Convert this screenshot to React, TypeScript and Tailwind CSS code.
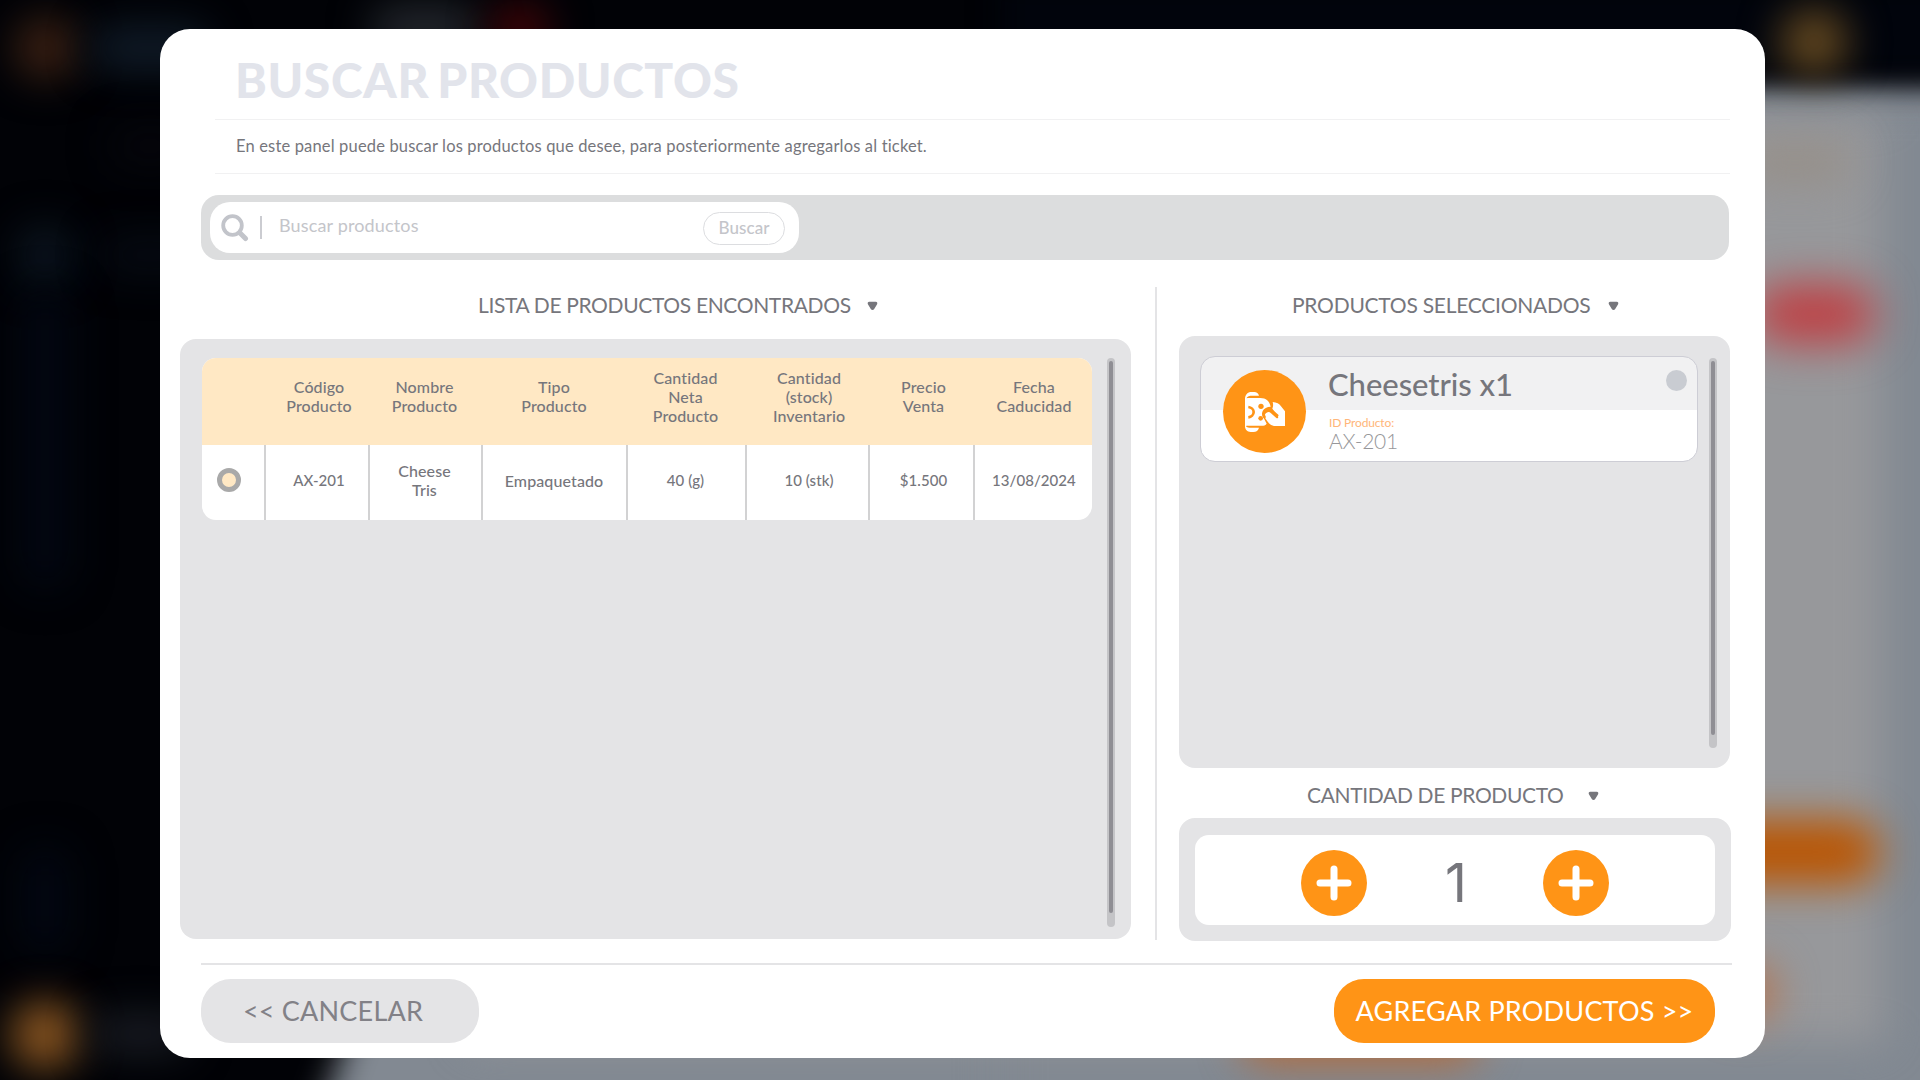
import type { ReactNode } from "react";

const columns = [
  { title: ["Código", "Producto"], cell: "w-[104px] pl-1", value: ["AX-201"] },
  { title: ["Nombre", "Producto"], cell: "w-[113px] pr-0.5", value: ["Cheese", "Tris"] },
  { title: ["Tipo", "Producto"], cell: "w-[145px] pr-px", value: ["Empaquetado"] },
  { title: ["Cantidad", "Neta", "Producto"], cell: "w-[119px] pr-0.5", value: ["40 (g)"] },
  { title: ["Cantidad", "(stock)", "Inventario"], cell: "w-[123px] pl-[3px]", value: ["10 (stk)"] },
  { title: ["Precio", "Venta"], cell: "w-[105px] pl-1", value: ["$1.500"] },
  { title: ["Fecha", "Caducidad"], cell: "w-[119px] pl-px", value: ["13/08/2024"] },
];

function Backdrop() {
  return (
    <div className="absolute inset-0 overflow-hidden bg-[#010206]">
      <div className="absolute left-[492px] top-[92px] h-[1100px] w-[1400px] -skew-x-[20deg] bg-[#828992] blur-[17px]" />
      <div className="absolute left-[1000px] top-[92px] h-[1100px] w-[1020px] bg-[#828992] blur-[20px]" />
      <div className="absolute left-[470px] top-[112px] h-[930px] w-[1412px] bg-[#97989b] blur-[20px]" />
      <div className="absolute left-[1000px] top-[-20px] h-[100px] w-[1100px] bg-[#01040c] blur-[15px]" />
      <div className="absolute left-[14px] top-[16px] h-[64px] w-[64px] rounded-full bg-[#3a2013] blur-[20px]" />
      <div className="absolute left-[90px] top-[26px] h-[44px] w-[120px] rounded-full bg-[#101c29] blur-[20px]" />
      <div className="absolute left-[370px] top-[6px] h-[44px] w-[110px] rounded-full bg-[#25292f] blur-[20px]" />
      <div className="absolute left-[490px] top-[6px] h-[44px] w-[60px] rounded-full bg-[#480508] blur-[20px]" />
      <div className="absolute left-[110px] top-[128px] h-[36px] w-[80px] rounded-full bg-[#06060c] blur-[20px]" />
      <div className="absolute left-[17px] top-[225px] h-[60px] w-[56px] rounded-full bg-[#0c1621] blur-[20px]" />
      <div className="absolute left-[100px] top-[238px] h-[34px] w-[100px] rounded-full bg-[#060b14] blur-[20px]" />
      <div className="absolute left-[20px] top-[290px] h-[300px] w-[50px] rounded-full bg-[#020712] blur-[20px]" />
      <div className="absolute left-[20px] top-[846px] h-[110px] w-[50px] rounded-full bg-[#020712] blur-[20px]" />
      <div className="absolute left-[10px] top-[1000px] h-[70px] w-[70px] rounded-full bg-[#885521] blur-[20px]" />
      <div className="absolute left-[90px] top-[1014px] h-[40px] w-[100px] rounded-full bg-[#191c23] blur-[20px]" />
      <div className="absolute left-[1780px] top-[8px] h-[68px] w-[68px] rounded-full bg-[#634820] blur-[20px]" />
      <div className="absolute left-[1740px] top-[142px] h-[40px] w-[110px] rounded-full bg-[#968f88] blur-[20px]" />
      <div className="absolute left-[1753px] top-[284px] h-[60px] w-[122px] rounded-full bg-[#bd4145] blur-[22px]" />
      <div className="absolute left-[1680px] top-[819px] h-[66px] w-[200px] rounded-full bg-[#b95604] blur-[20px]" />
      <div className="absolute left-[1720px] top-[962px] h-[60px] w-[56px] rounded-full bg-[#b4744f] blur-[20px]" />
      <div className="absolute left-[1240px] top-[1010px] h-[54px] w-[240px] rounded-full bg-[#b06a3c] blur-[20px]" />
    </div>
  );
}

function Marker() {
  return (
    <svg width="11" height="10" viewBox="0 0 11 10" className="mt-0.5 block fill-[#76767c]">
      <path d="M2.2.8h6.6c1.3 0 1.9 1.3 1.3 2.4L7.2 8.1c-.7 1.2-2.7 1.2-3.4 0L.9 3.2C.3 2.1.9.8 2.2.8z" />
    </svg>
  );
}

function Heading({ children, className, gap, tracking }: { children: ReactNode; className: string; gap: string; tracking: string }) {
  return (
    <div className={`flex items-center text-[21px] text-[#76767c] ${className} ${gap}`}>
      <h2 className={`whitespace-nowrap ${tracking}`}>{children}</h2>
      <Marker />
    </div>
  );
}

function Scrollbar({ track, thumb }: { track: string; thumb: string }) {
  return (
    <div className={`w-2 shrink-0 rounded-full bg-[#c4c4c7] px-0.5 pt-[3px] ${track}`}>
      <div className={`w-1 rounded-full bg-[#8f8e94] ${thumb}`} />
    </div>
  );
}

function CheeseIcon() {
  return (
    <svg width="40" height="40" viewBox="0 0 120 120" fill="none">
      <path d="M0 22C0 8 8 0 19 0h9c7 0 12 4 14 11H16C8 12 5 16 3 22z" fill="#fff" />
      <path d="M0 98c3 5 7 9 14 9h28c-2 8-8 13-17 13h-8C7 120 0 113 0 103z" fill="#fff" />
      <path d="M0 22c3-3 7-4 12-4h34c17 0 28 10 31 26-11 0-20 5-24 13-4 9-2 17 5 25l7 13c-3 5-9 6-15 6H12c-6 0-10-1-12-3z" fill="#fff" />
      <path d="M0 18h5v84H0z" fill="#fff" />
      <path d="M10 45c9 1 16 7 16 15s-7 15-16 16" stroke="#ff9416" strokeWidth="8" />
      <circle cx="48" cy="43" r="8" fill="#ff9416" />
      <circle cx="47" cy="79" r="7" fill="#ff9416" />
      <path d="M83 30c12 1 20 5 25 13l12 15v44H92c-13 0-21-7-27-17l-5-8c-3-7 0-13 5-15 5-3 9-2 13 2l16 14c4 2 7-1 5-5L82 50c3-6 3-13 1-20z" fill="#fff" />
      <path d="M97 70 80 56c-6-5-13-4-18 0-6 5-7 12-3 19" stroke="#ff9416" strokeWidth="7" strokeLinecap="round" />
    </svg>
  );
}

function RoundPlus() {
  return (
    <button className="flex size-[66px] items-center justify-center rounded-full bg-[#ff9416]">
      <svg width="36" height="36" viewBox="0 0 36 36" stroke="#fff" strokeWidth="7" strokeLinecap="round">
        <path d="M18 4v28M4 18h28" />
      </svg>
    </button>
  );
}

function Header() {
  return (
    <header className="ml-[55px] w-[1515px]">
      <h1 className="flex h-[90px] items-center pl-[20px] pt-[12px] text-[48px] font-black tracking-[0.6px] text-[#e2e4eb] [word-spacing:-4px]">
        BUSCAR PRODUCTOS
      </h1>
      <p className="flex h-[55px] items-center border-y border-[#f1f1f2] pl-[21px] text-[16.5px] tracking-[0.16px] text-[#76767c]">
        En este panel puede buscar los productos que desee, para posteriormente agregarlos al ticket.
      </p>
    </header>
  );
}

function SearchBar() {
  return (
    <div className="ml-[41px] mt-[21px] flex h-[65px] w-[1528px] items-center rounded-[18px] bg-[#dcddde] pl-[9px]">
      <div className="flex h-[51px] w-[589px] items-center rounded-[20px] bg-white pl-[11px] pr-[14px]">
        <svg width="28" height="28" viewBox="0 0 28 28" fill="none" stroke="#c2c4ca" strokeLinecap="round">
          <circle cx="11.5" cy="11.5" r="9.3" strokeWidth="3.8" />
          <path d="m19.5 19.5 5 5" strokeWidth="5" />
        </svg>
        <span className="ml-[11px] h-[23px] w-0.5 bg-[#cbccd1]" />
        <span className="ml-[17px] pb-1 text-[18px] tracking-[0.15px] text-[#c4c5ca]">Buscar productos</span>
        <button className="ml-auto mt-0.5 flex h-[33px] w-[82px] items-center justify-center rounded-[17px] border border-[#dcdde0] pb-0.5 text-[17px] font-medium tracking-[0.05px] text-[#c4c5ca]">
          Buscar
        </button>
      </div>
    </div>
  );
}

function FoundProducts() {
  return (
    <section className="ml-5 w-[951px]">
      <Heading className="h-[79px] pl-[298px] pt-[11px]" gap="gap-[16px]" tracking="tracking-[-0.35px]">
        LISTA DE PRODUCTOS ENCONTRADOS
      </Heading>
      <div className="flex h-[600px] items-start justify-between rounded-2xl bg-[#e4e4e6] pl-[22px] pr-4 pt-[19px]">
        <div className="w-[890px] overflow-hidden rounded-[14px] bg-white text-[16px] font-medium leading-[19px] tracking-[0.1px] text-[#76767c]">
          <div className="flex h-[87px] bg-[#ffe8c4] pb-[11px] pl-[62px]">
            {columns.map((c, i) => (
              <div key={i} className={`flex flex-col items-center justify-center border-l-2 border-transparent ${c.cell}`}>
                {c.title.map((line) => (
                  <span key={line}>{line}</span>
                ))}
              </div>
            ))}
          </div>
          <div className="flex h-[75px]">
            <div className="flex w-[62px] items-center pb-[5px] pl-[15px]">
              <span className="size-6 rounded-full border-[5px] border-[#a9a9a9] bg-[#ffe8c4]" />
            </div>
            {columns.map((c, i) => (
              <div
                key={i}
                className={`flex flex-col items-center justify-center border-l-2 border-[#d2d2d3] ${c.cell} ${
                  /\d/.test(c.value[0]) ? "pb-1 text-[15px] leading-[19px] tracking-[0.05px]" : "pb-[5px]"
                }`}
              >
                {c.value.map((line) => (
                  <span key={line}>{line}</span>
                ))}
              </div>
            ))}
          </div>
        </div>
        <Scrollbar track="h-[569px]" thumb="h-[552px]" />
      </div>
    </section>
  );
}

function SelectedProducts() {
  return (
    <section className="ml-[22px] w-[552px]">
      <Heading className="h-[76px] pl-[113px] pt-[14px]" gap="gap-[18px]" tracking="tracking-[-0.25px]">
        PRODUCTOS SELECCIONADOS
      </Heading>
      <div className="flex h-[432px] w-[551px] items-start justify-between rounded-2xl bg-[#e4e4e6] pl-[21px] pr-[13px] pt-5">
        <article className="flex h-[106px] w-[498px] rounded-[15px] border border-[#cdcdd5] bg-linear-to-b from-[#f1f1f2] from-[53px] to-white to-[53px] pl-[22px] pr-[10px]">
          <div className="mt-[13px] flex size-[83px] shrink-0 items-center justify-center rounded-full bg-[#ff9416]">
            <CheeseIcon />
          </div>
          <div className="ml-[23px] flex flex-col">
            <h3 className="-ml-px mt-[7px] h-[41px] text-[31px] font-medium leading-[40px] tracking-[-0.05px] text-[#76767c]">Cheesetris x1</h3>
            <span className="mt-[10px] text-[12px] leading-[15px] tracking-[-0.15px] text-[#ffb679]">ID Producto:</span>
            <span className="text-[21px] font-light leading-[21px] tracking-[-0.3px] text-[#97979a]">AX-201</span>
          </div>
          <span className="ml-auto mt-[13px] size-[21px] rounded-full bg-[#c9ccd2]" />
        </article>
        <div className="pt-0.5">
          <Scrollbar track="h-[390px]" thumb="h-[374px]" />
        </div>
      </div>
      <Heading className="h-[50px] pl-[128px] pt-[3px]" gap="gap-[24px]" tracking="tracking-[-0.35px]">
        CANTIDAD DE PRODUCTO
      </Heading>
      <div className="flex h-[123px] rounded-2xl bg-[#e4e4e6] px-4 pt-[17px]">
        <div className="flex h-[90px] w-[520px] items-center rounded-[14px] bg-white px-[106px] pt-[5px]">
          <RoundPlus />
          <span className="flex-1 pl-0.5 text-center font-['Inter',sans-serif] text-[54px] leading-none text-[#76767c]">1</span>
          <RoundPlus />
        </div>
      </div>
    </section>
  );
}

function Footer() {
  return (
    <footer className="ml-[41px] mt-[22px] w-[1531px] border-t-2 border-[#e4e4e6] pr-[17px] pt-[14px]">
      <div className="flex h-16 justify-between text-[27px] leading-[64px] tracking-[0.2px]">
        <button className="w-[278px] rounded-[30px] bg-[#e4e4e6] pl-[42px] text-left text-[#828187]">&lt;&lt; CANCELAR</button>
        <button className="w-[381px] rounded-[30px] bg-[#ff9416] text-center text-white">AGREGAR PRODUCTOS &gt;&gt;</button>
      </div>
    </footer>
  );
}

export default function App() {
  return (
    <div className="relative h-[1080px] w-[1920px] overflow-hidden font-['Lato',sans-serif]">
      <Backdrop />
      <main className="relative ml-[160px] mt-[29px] flex h-[1029px] w-[1605px] flex-col rounded-[30px] bg-white">
        <Header />
        <SearchBar />
        <div className="flex h-[681px]">
          <FoundProducts />
          <div className="ml-6 mt-[27px] h-[653px] w-0.5 bg-[#e4e4e6]" />
          <SelectedProducts />
        </div>
        <Footer />
      </main>
    </div>
  );
}
